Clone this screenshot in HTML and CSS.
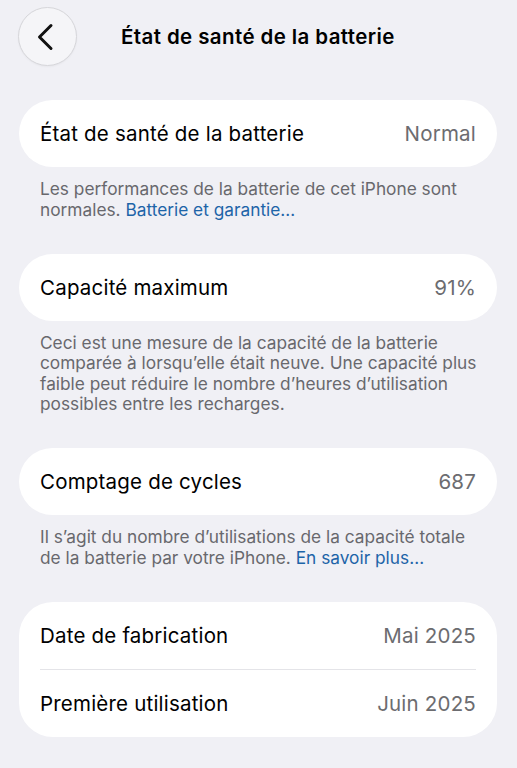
FILE: index.html
```html
<!DOCTYPE html>
<html lang="fr">
<head>
<meta charset="utf-8">
<title>État de santé de la batterie</title>
<link rel="stylesheet" href="styles.css">
</head>
<body>
<header class="nav">
  <button class="back" aria-label="Retour">
    <svg width="20" height="28" viewBox="0 0 20 28"><path d="M15 2.5 L3.5 14 L15 25.5" fill="none" stroke="#111" stroke-width="3" stroke-linecap="round" stroke-linejoin="round"/></svg>
  </button>
  <h1 class="title">État de santé de la batterie</h1>
</header>
<main class="content">
  <section class="group">
    <div class="card">
      <div class="row"><span class="label">État de santé de la batterie</span><span class="value">Normal</span></div>
    </div>
    <p class="footer">Les performances de la batterie de cet iPhone sont normales. <a class="link">Batterie et garantie…</a></p>
  </section>
  <section class="group">
    <div class="card">
      <div class="row"><span class="label">Capacité maximum</span><span class="value">91%</span></div>
    </div>
    <p class="footer">Ceci est une mesure de la capacité de la batterie comparée à lorsqu’elle était neuve. Une capacité plus faible peut réduire le nombre d’heures d’utilisation possibles entre les recharges.</p>
  </section>
  <section class="group">
    <div class="card">
      <div class="row"><span class="label">Comptage de cycles</span><span class="value">687</span></div>
    </div>
    <p class="footer">Il s’agit du nombre d’utilisations de la capacité totale de la batterie par votre iPhone. <a class="link">En savoir plus…</a></p>
  </section>
  <section class="group">
    <div class="card">
      <div class="row"><span class="label">Date de fabrication</span><span class="value">Mai 2025</span></div>
      <div class="divider"></div>
      <div class="row"><span class="label">Première utilisation</span><span class="value">Juin 2025</span></div>
    </div>
  </section>
</main>
</body>
</html>
```
FILE: styles.css
```css
html, body {
  margin: 0;
  padding: 0;
}
body {
  background: #f0f0f5;
  font-family: Inter, "Noto Sans", "Liberation Sans", sans-serif;
  color: #000;
  width: 517px;
  min-height: 768px;
}
.nav {
  display: flex;
  align-items: center;
  gap: 44px;
  padding: 7px 0 0 18px;
  height: 59px;
}
.back {
  width: 59px;
  height: 59px;
  border-radius: 50%;
  border: 1px solid #d6d6da;
  background: #f5f5f8;
  box-shadow: 0 1px 2px rgba(0,0,0,0.04);
  display: flex;
  align-items: center;
  justify-content: center;
  padding: 0 4px 0 0;
  flex: none;
}
.title {
  margin: 0;
  font-size: 20.5px;
  font-weight: 600;
  letter-spacing: 0.4px;
}
.content {
  padding: 34px 20px 0 19px;
}
.group {
  margin-bottom: 33.5px;
}
.card {
  background: #fff;
  border-radius: 34px;
  padding: 0 21px;
}
.row {
  height: 67px;
  display: flex;
  align-items: center;
  justify-content: space-between;
  font-size: 20.5px;
  letter-spacing: 0.2px;
}
.value {
  color: #6c6c70;
}
.divider {
  height: 1px;
  background: #e4e4e8;
}
.footer {
  margin: 0;
  padding: 12px 19px 0 21px;
  font-size: 17.3px;
  line-height: 20.5px;
  color: #68686d;
  letter-spacing: 0;
}
.link {
  color: #1d64a8;
}
```
